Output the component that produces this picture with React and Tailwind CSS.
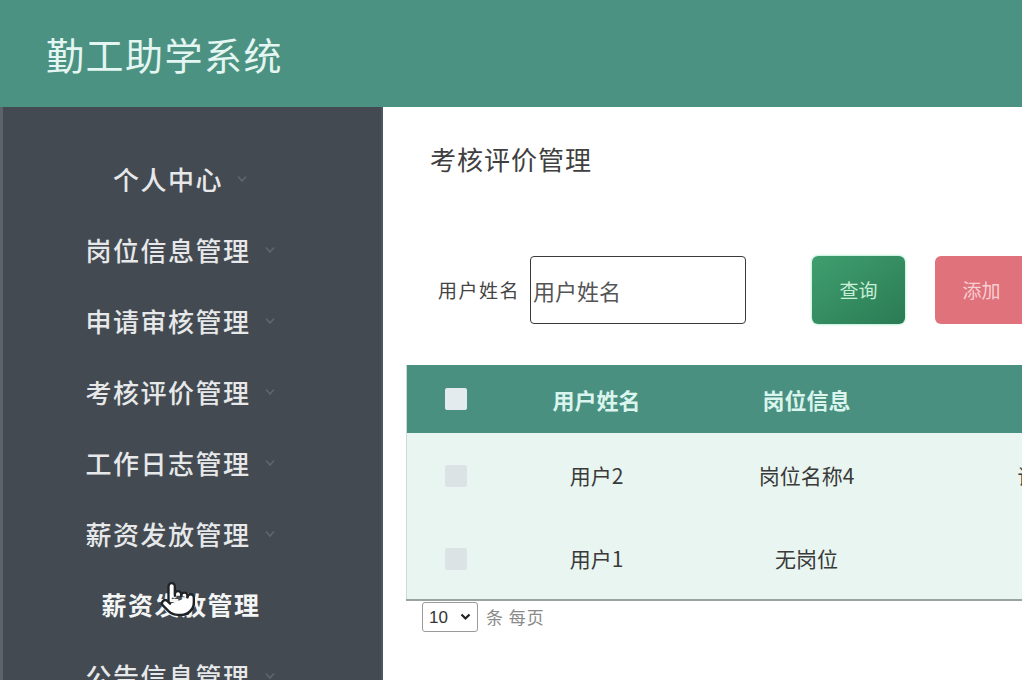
import React from 'react';
import { Pointer } from 'lucide-react';

const font = { fontFamily: '"Noto Sans CJK SC", "Noto Sans", sans-serif' };

const menu = ['个人中心', '岗位信息管理', '申请审核管理', '考核评价管理', '工作日志管理', '薪资发放管理'];

function Caret() {
  return (
    <svg className="absolute left-full top-1/2 ml-[14px] -translate-y-1/2" width="10" height="8" viewBox="0 0 10 8">
      <path d="M1 1.5 L5 6 L9 1.5" fill="none" stroke="#5f666d" strokeWidth="1.6" />
    </svg>
  );
}

function MenuItem({ label }) {
  return (
    <div className="h-[71px] flex items-center justify-center">
      <span className="relative text-[26px] tracking-[1.5px] font-medium text-[#e6e8e9]">
        {label}
        <Caret />
      </span>
    </div>
  );
}

const rows = [
  { name: '用户2', post: '岗位名称4', extra: '评', h: 'h-[85px]' },
  { name: '用户1', post: '无岗位', extra: '', h: 'h-[82px]' },
];

export default function App() {
  return (
    <div className="w-[1022px] h-[680px] overflow-hidden flex flex-col bg-white" style={font}>
      {/* header */}
      <div className="h-[107px] shrink-0 bg-[#4b9282] flex items-center pl-[46px]">
        <h1 className="text-[38px] tracking-[1.5px] text-[#e4f6f1] font-normal">勤工助学系统</h1>
      </div>

      <div className="flex flex-1 min-h-0">
        {/* sidebar */}
        <div className="w-[383px] shrink-0 bg-[#434a51] border-l-[3px] border-[#5c636a] border-r-2 border-r-[#4f565d]">
          <div className="w-[330px] pt-[36px] flex flex-col">
            {menu.map((m) => (
              <MenuItem key={m + '1'} label={m} />
            ))}
            <div className="h-[71px] flex items-center justify-center pl-[26px]">
              <span className="relative text-[25px] tracking-[1.5px] font-bold text-[#f4f5f5]">
                薪资发放管理
                <Pointer className="absolute left-[58px] top-[-6px]" size={38} fill="#ffffff" stroke="#1f2327" strokeWidth={1.5} />
              </span>
            </div>
            <MenuItem label="公告信息管理" />
          </div>
        </div>

        {/* main */}
        <div className="flex-1 min-w-0 overflow-hidden">
          <div className="w-[680px]">
            <h2 className="pl-[47px] pt-[34px] text-[26px] tracking-[1px] text-[#3f3f3f] font-normal leading-[36px]">考核评价管理</h2>

            <div className="flex items-center pl-[55px] mt-[79px] h-[68px]">
              <span className="text-[19px] tracking-[1.5px] text-[#444]">用户姓名</span>
              <div className="ml-[10px] w-[216px] h-[68px] border-[1.5px] border-[#3a3a3a] rounded-[4px] flex items-center pl-[2px]">
                <span className="text-[22px] text-[#555]">用户姓名</span>
              </div>
              <button className="ml-[66px] w-[93px] h-[68px] rounded-[6px] bg-gradient-to-br from-[#3f9f6e] to-[#2b7b54] text-[19px] text-[#c9efd8] shadow-[0_0_3px_#7fe0b5]">查询</button>
              <button className="ml-[30px] w-[93px] h-[68px] shrink-0 rounded-[6px] bg-[#e0727b] text-[19px] text-[#f7cfd2]">添加</button>
            </div>

            <table className="ml-[23px] mt-[41px] w-[790px] table-fixed border-collapse border-l border-[#cfd8d6]">
              <colgroup>
                <col className="w-[100px]" />
                <col className="w-[180px]" />
                <col className="w-[240px]" />
                <col className="w-[270px]" />
              </colgroup>
              <thead>
                <tr className="h-[68px] bg-[#4a9080] text-[#d9f5ed]">
                  <th>
                    <div className="ml-[38px] w-[22px] h-[22px] bg-[#e4ebee] rounded-[2px]" />
                  </th>
                  <th className="text-[22px] font-bold">用户姓名</th>
                  <th className="text-[22px] font-bold">岗位信息</th>
                  <th />
                </tr>
              </thead>
              <tbody className="bg-[#e9f5f0] text-[#3a3a3a] text-[21px]">
                {rows.map((r, i) => (
                  <tr key={r.name} className={r.h + (i === rows.length - 1 ? ' border-b-2 border-[#9aa3a1]' : '')}>
                    <td>
                      <div className="ml-[38px] w-[22px] h-[22px] bg-[#dce3e4] rounded-[2px]" />
                    </td>
                    <td className="text-center">{r.name}</td>
                    <td className="text-center">{r.post}</td>
                    <td className="pl-[91px]">{r.extra}</td>
                  </tr>
                ))}
              </tbody>
            </table>

            <div className="flex items-center ml-[39px] mt-[1px]">
              <div className="w-[56px] h-[30px] border border-[#9a9a9a] rounded-[3px] flex items-center justify-between px-[6px]">
                <span className="text-[17px] text-[#333] leading-none" style={{ fontFamily: '"Liberation Sans", sans-serif' }}>10</span>
                <svg width="11" height="8" viewBox="0 0 11 8">
                  <path d="M1.5 1.5 L5.5 5.5 L9.5 1.5" fill="none" stroke="#222" strokeWidth="2.2" />
                </svg>
              </div>
              <span className="ml-[8px] text-[17px] text-[#8a8a8a] tracking-[1px]">条 每页</span>
            </div>
          </div>
        </div>
      </div>
    </div>
  );
}
